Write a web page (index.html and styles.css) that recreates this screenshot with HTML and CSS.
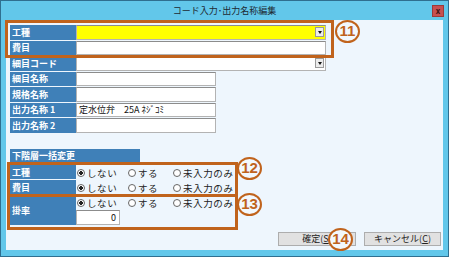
FILE: index.html
```html
<!DOCTYPE html>
<html lang="ja">
<head>
    <meta charset="UTF-8">
    <title>コード入力･出力名称編集</title>
    <link rel="stylesheet" href="styles.css">
</head>
<body>
    <div class="window">
        <div class="titlebar">
            <span></span>
            <span class="title">コード入力･出力名称編集</span>
            <span class="close">x</span>
        </div>
        <div class="client">
            <div class="fields">
                <div class="row">
                    <div class="label">工種</div>
                    <div class="combo yellow"><span class="drop"></span></div>
                </div>
                <div class="row">
                    <div class="label">費目</div>
                    <div class="text wide"></div>
                </div>
                <div class="row">
                    <div class="label">細目コード</div>
                    <div class="combo"><span class="drop"></span></div>
                </div>
                <div class="row">
                    <div class="label">細目名称</div>
                    <div class="text"></div>
                </div>
                <div class="row">
                    <div class="label">規格名称</div>
                    <div class="text"></div>
                </div>
                <div class="row">
                    <div class="label">出力名称 1</div>
                    <div class="text">定水位弁　25A ﾈｼﾞｺﾐ</div>
                </div>
                <div class="row">
                    <div class="label">出力名称 2</div>
                    <div class="text"></div>
                </div>
            </div>

            <div class="batch">
                <div class="batch-head">下階層一括変更</div>
                <div class="brow">
                    <div class="label">工種</div>
                    <div class="radios">
                        <span class="opt on">しない</span>
                        <span class="opt">する</span>
                        <span class="opt">未入力のみ</span>
                    </div>
                </div>
                <div class="brow">
                    <div class="label">費目</div>
                    <div class="radios">
                        <span class="opt on">しない</span>
                        <span class="opt">する</span>
                        <span class="opt">未入力のみ</span>
                    </div>
                </div>
                <div class="brow tall">
                    <div class="label mid">掛率</div>
                    <div class="stack">
                        <div class="radios">
                            <span class="opt on">しない</span>
                            <span class="opt">する</span>
                            <span class="opt">未入力のみ</span>
                        </div>
                        <div class="text num">0</div>
                    </div>
                </div>
            </div>

            <div class="buttons">
                <button class="btn ok">確定(<u>S</u>)</button>
                <button class="btn cancel">キャンセル(<u>C</u>)</button>
            </div>
        </div>

        <!-- callouts drawn over the dialog -->
        <div class="mark box11"></div>
        <div class="mark box12"></div>
        <div class="mark box13"></div>
        <div class="badge b11">11</div>
        <div class="badge b12">12</div>
        <div class="badge b13">13</div>
        <div class="badge b14">14</div>
    </div>
</body>
</html>
```

FILE: styles.css
```css
body {
    margin: 0;
    font-family: "Noto Sans CJK JP", "Liberation Sans", sans-serif;
}
.window {
    position: relative;
    width: 449px;
    height: 257px;
    box-sizing: border-box;
    border: 1px solid #2f6f90;
    background: #62c7ea;
}
.titlebar {
    height: 19px;
    display: grid;
    grid-template-columns: 1fr auto 1fr;
    align-items: center;
}
.title {
    font-size: 9px;
    color: #1e2a33;
    line-height: 19px;
}
.close {
    justify-self: end;
    margin-right: 4px;
    width: 12px;
    height: 12px;
    background: #c75050;
    border: 1px solid #9b3a3a;
    box-sizing: border-box;
    color: #3a1010;
    font-size: 8px;
    font-weight: bold;
    line-height: 9px;
    text-align: center;
}
.client {
    margin: 0 5px;
    height: 230px;
    box-sizing: border-box;
    padding: 5px 2px 0 4px;
    background: #eef6fd;
    display: flex;
    flex-direction: column;
}
.row {
    display: flex;
    height: 14.5px;
    margin-bottom: 1px;
}
.label {
    width: 66px;
    flex-shrink: 0;
    background: #3f80b8;
    color: #ffffff;
    font-size: 9px;
    font-weight: bold;
    padding-left: 2px;
    box-sizing: border-box;
    display: flex;
    align-items: center;
}
.text, .combo {
    height: 100%;
    box-sizing: border-box;
    border: 1px solid #b3b3b3;
    border-top-color: #8c8c8c;
    background: #ffffff;
    font-size: 9px;
    color: #111;
    padding-left: 2px;
    display: flex;
    align-items: center;
    white-space: pre;
    width: 140px;
}
.combo, .wide {
    width: 250px;
}
.combo {
    justify-content: flex-end;
    padding-right: 1px;
}
.yellow {
    background: #ffff00;
}
.drop {
    width: 9px;
    height: 10px;
    box-sizing: border-box;
    background: #ececec;
    border: 1px solid #9a9a9a;
    display: flex;
    align-items: center;
    justify-content: center;
}
.drop::after {
    content: "";
    border-left: 2.5px solid transparent;
    border-right: 2.5px solid transparent;
    border-top: 3px solid #111;
}
.batch {
    margin-top: 15.5px;
}
.batch-head {
    width: 130px;
    height: 13px;
    background: #3f80b8;
    color: #ffffff;
    font-size: 9px;
    font-weight: bold;
    padding-left: 2px;
    box-sizing: border-box;
    line-height: 13px;
    margin-bottom: 3px;
}
.brow {
    display: flex;
    height: 14px;
    margin-bottom: 1px;
}
.brow + .brow.tall {
    margin-top: 1px;
}
.tall {
    height: 30px;
}
.stack {
    display: flex;
    flex-direction: column;
}
.radios {
    display: flex;
    height: 15px;
    align-items: center;
    padding-left: 1px;
}
.opt {
    display: flex;
    align-items: center;
    font-size: 9.5px;
    letter-spacing: 0.6px;
    color: #222;
    width: 51px;
}
.opt + .opt {
    width: 45px;
}
.opt + .opt + .opt {
    width: auto;
}
.opt::before {
    content: "";
    width: 8px;
    height: 8px;
    box-sizing: border-box;
    border: 1px solid #666;
    border-radius: 50%;
    margin-right: 2px;
    background: #fff;
}
.opt.on::before {
    background: radial-gradient(circle, #222 0 1.6px, #fff 2px);
}
.num {
    width: 44px;
    height: 15px;
    justify-content: flex-end;
    padding-right: 3px;
}
.buttons {
    display: flex;
    justify-content: flex-end;
    gap: 8px;
    margin-top: 6px;
}
.btn {
    height: 14px;
    padding: 0;
    background: #e1e1e1;
    border: 1px solid #adadad;
    font-family: "Noto Sans CJK JP", "Liberation Sans", sans-serif;
    font-size: 9px;
    color: #222;
    line-height: 12px;
}
.ok {
    width: 78px;
}
.cancel {
    width: 77px;
}
.mark {
    position: absolute;
    border: 3px solid #c0631c;
    box-sizing: border-box;
}
.box11 {
    left: 4px;
    top: 19px;
    width: 329px;
    height: 38px;
}
.box12 {
    left: 6px;
    top: 161px;
    width: 231px;
    height: 35px;
}
.box13 {
    left: 6px;
    top: 193px;
    width: 231px;
    height: 36px;
}
.badge {
    position: absolute;
    width: 25px;
    height: 23px;
    box-sizing: border-box;
    border: 2.5px solid #c0631c;
    border-radius: 50%;
    background: #f2f8fd;
    color: #c0631c;
    font-family: "Liberation Sans", sans-serif;
    font-weight: bold;
    font-size: 15px;
    line-height: 18px;
    text-align: center;
}
.b11 {
    left: 334px;
    top: 19px;
}
.b12 {
    left: 236px;
    top: 156px;
}
.b13 {
    left: 236px;
    top: 192px;
}
.b14 {
    left: 327px;
    top: 227px;
}
```
